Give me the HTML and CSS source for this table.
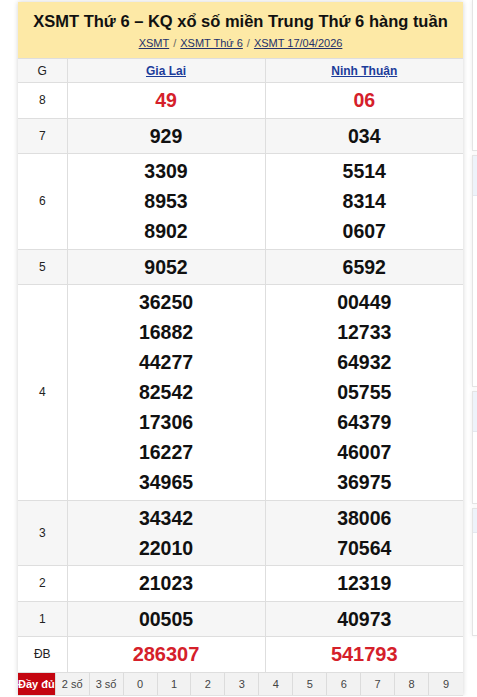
FILE: index.html
```html
<!DOCTYPE html>
<html lang="vi">
<head>
<meta charset="utf-8">
<title>XSMT Thứ 6</title>
<link rel="stylesheet" href="styles.css">
</head>
<body>
<div class="page">
  <div class="card">
    <div class="head">
      <h2 class="title">XSMT Thứ 6 – KQ xổ số miền Trung Thứ 6 hàng tuần</h2>
      <div class="crumbs"><a href="#">XSMT</a><span class="sep">/</span><a href="#">XSMT Thứ 6</a><span class="sep">/</span><a href="#">XSMT 17/04/2026</a></div>
    </div>
    <table class="kq">
      <colgroup><col class="c-g"><col class="c-p"><col class="c-p"></colgroup>
      <thead>
        <tr><th class="lbl">G</th><th><a href="#">Gia Lai</a></th><th><a href="#">Ninh Thuận</a></th></tr>
      </thead>
      <tbody>
        <tr><td class="lbl">8</td><td class="num red"><div>49</div></td><td class="num red"><div>06</div></td></tr>
        <tr class="alt"><td class="lbl">7</td><td class="num"><div>929</div></td><td class="num"><div>034</div></td></tr>
        <tr><td class="lbl">6</td><td class="num"><div>3309</div><div>8953</div><div>8902</div></td><td class="num"><div>5514</div><div>8314</div><div>0607</div></td></tr>
        <tr class="alt"><td class="lbl">5</td><td class="num"><div>9052</div></td><td class="num"><div>6592</div></td></tr>
        <tr><td class="lbl">4</td><td class="num"><div>36250</div><div>16882</div><div>44277</div><div>82542</div><div>17306</div><div>16227</div><div>34965</div></td><td class="num"><div>00449</div><div>12733</div><div>64932</div><div>05755</div><div>64379</div><div>46007</div><div>36975</div></td></tr>
        <tr class="alt"><td class="lbl">3</td><td class="num"><div>34342</div><div>22010</div></td><td class="num"><div>38006</div><div>70564</div></td></tr>
        <tr><td class="lbl">2</td><td class="num"><div>21023</div></td><td class="num"><div>12319</div></td></tr>
        <tr class="alt"><td class="lbl">1</td><td class="num"><div>00505</div></td><td class="num"><div>40973</div></td></tr>
        <tr><td class="lbl">ĐB</td><td class="num red db"><div>286307</div></td><td class="num red db"><div>541793</div></td></tr>
      </tbody>
    </table>
    <div class="tabs">
      <span class="tab active">Đầy đủ</span>
      <span class="tab">2 số</span>
      <span class="tab">3 số</span>
      <span class="tab">0</span>
      <span class="tab">1</span>
      <span class="tab">2</span>
      <span class="tab">3</span>
      <span class="tab">4</span>
      <span class="tab">5</span>
      <span class="tab">6</span>
      <span class="tab">7</span>
      <span class="tab">8</span>
      <span class="tab">9</span>
    </div>
  </div>
  <aside class="side">
    <div class="box b1"></div>
    <div class="box b2"><div class="bh"></div></div>
    <div class="box b3"><div class="bh"></div></div>
    <div class="box b4"><div class="bh"></div></div>
  </aside>
</div>
</body>
</html>
```

FILE: styles.css
```css
* { box-sizing: border-box; }
html, body { margin: 0; padding: 0; background: #fff; }
body {
  font-family: "Liberation Sans", Arial, sans-serif;
  color: #222;
  overflow: hidden;
}
.page {
  display: flex;
  align-items: flex-start;
  gap: 9px;
  padding: 2px 0 0 18px;
  width: 477px;
  overflow: hidden;
}
.card {
  flex: 0 0 445px;
  width: 445px;
  background: #fff;
  box-shadow: 0 0 5px rgba(0, 0, 0, 0.18);
}
.head {
  background: #fde9a6;
  padding: 6px 0 6px;
  text-align: center;
}
.title {
  margin: 0;
  font-size: 16.5px;
  font-weight: bold;
  line-height: 26px;
  color: #111;
}
.crumbs {
  font-size: 11px;
  line-height: 18px;
  color: #666;
}
.crumbs a { color: #23306b; text-decoration: underline; }
.crumbs .sep { margin: 0 4px; color: #666; }

.kq {
  width: 100%;
  border-collapse: collapse;
  table-layout: fixed;
}
.c-g { width: 49px; }
.kq th, .kq td {
  border: 1px solid #dedede;
  text-align: center;
  vertical-align: middle;
}
.kq tr > :first-child { border-left: 0; }
.kq tr > :last-child { border-right: 0; }
.kq thead tr { background: #f6f6f6; }
.kq th { height: 24px; font-size: 12px; font-weight: bold; padding: 0; }
.kq th a { color: #1c3c9a; text-decoration: underline; }
.kq .lbl { font-size: 12px; font-weight: normal; color: #222; }
.kq tr.alt { background: #f6f6f6; }
.num { padding: 2px 0 2.5px; }
.num div {
  font-size: 19.5px;
  font-weight: bold;
  line-height: 30px;
  color: #111;
}
.num.red div { color: #d5202a; }
.num.db div { font-size: 20px; }

.tabs {
  display: grid;
  grid-template-columns: repeat(13, 1fr);
  height: 23px;
  background: #f2f2f2;
  border-bottom: 1px solid #e2e2e2;
}
.tab {
  display: flex;
  align-items: center;
  justify-content: center;
  font-size: 11px;
  color: #444;
  border-right: 1px solid #dcdcdc;
  white-space: nowrap;
}
.tab:last-child { border-right: 0; }
.tab.active {
  background: #c40510;
  color: #fff;
  font-weight: bold;
}

.side {
  flex: 1 1 0;
  min-width: 0;
  display: flex;
  flex-direction: column;
  gap: 4px;
  margin-top: -2px;
}
.box {
  border: 1px solid #e4e4e4;
  border-right: 0;
  background: #fff;
  box-shadow: 0 0 4px rgba(0, 0, 0, 0.08);
}
.b1 { height: 151px; border-top: 0; }
.b2 { height: 232px; }
.b3 { height: 113px; }
.b4 { height: 128px; }
.bh { height: 40px; background: #eef3fa; border-bottom: 1px solid #e4e8ef; }
.b4 .bh { height: 24px; }
```
